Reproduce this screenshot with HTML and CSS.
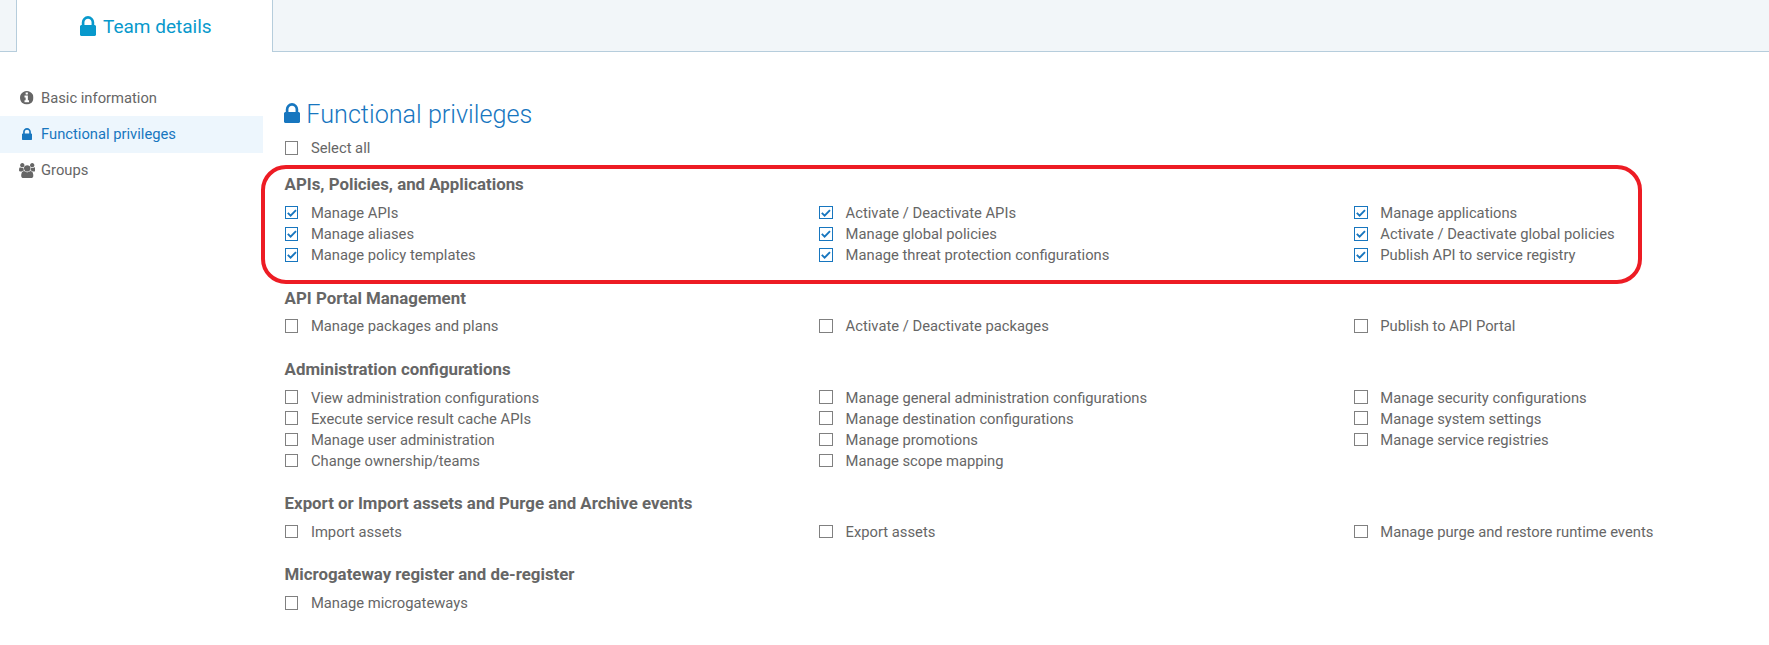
FILE: index.html
```html
<!DOCTYPE html>
<html lang="en">
<head>
<meta charset="utf-8">
<title>Team details</title>
<link rel="stylesheet" href="styles.css">
</head>
<body>
<svg class="sprite" aria-hidden="true">
  <symbol id="lock" viewBox="0 0 1152 1408" preserveAspectRatio="none"><path d="M320 640h512V448q0-106-75-181t-181-75-181 75-75 181zm832 96v576q0 40-28 68t-68 28H96q-40 0-68-28t-28-68V736q0-40 28-68t68-28h32V448q0-184 132-316T576 0t316 132 132 316v192h32q40 0 68 28t28 68z"/></symbol>
  <symbol id="info" viewBox="0 0 1536 1536"><path d="M1024 1248v-160q0-14-9-23t-23-9h-96V544q0-14-9-23t-23-9H544q-14 0-23 9t-9 23v160q0 14 9 23t23 9h96v320h-96q-14 0-23 9t-9 23v160q0 14 9 23t23 9h448q14 0 23-9t9-23zM896 352V192q0-14-9-23t-23-9H672q-14 0-23 9t-9 23v160q0 14 9 23t23 9h192q14 0 23-9t9-23zm640 416q0 209-103 385.500T1153.500 1433 768 1536t-385.500-103T103 1153.500 0 768t103-385.500T382.500 103 768 0t385.500 103T1433 382.500 1536 768z"/></symbol>
  <symbol id="group" viewBox="0 0 1920 1792" preserveAspectRatio="none"><path d="M593 896q-162 5-265 128H194q-82 0-138-40.500T0 865q0-353 124-353 6 0 43.500 21t97.500 42.500T384 597q67 0 133-23-5 37-5 66 0 139 81 256zm1071 637q0 120-73 189.500t-194 69.500H523q-121 0-194-69.500T256 1533q0-53 3.500-103.500t14-109T300 1212t43-97.500 62-81 85.500-53.500T602 960q10 0 43 21.500t73 48 107 48 135 21.500 135-21.500 107-48 73-48 43-21.500q61 0 111.500 20t85.500 53.500 62 81 43 97.500 26.500 108.500 14 109 3.500 103.500zM640 256q0 106-75 181t-181 75-181-75-75-181 75-181T384 0t181 75 75 181zm704 384q0 159-112.500 271.500T960 1024 688.500 911.500 576 640t112.500-271.500T960 256t271.500 112.500T1344 640zm576 225q0 78-56 118.500t-138 40.500h-134q-103-123-265-128 81-117 81-256 0-29-5-66 66 23 133 23 59 0 119-21.500t97.500-42.500 43.500-21q124 0 124 353zm-128-609q0 106-75 181t-181 75-181-75-75-181 75-181 181-75 181 75 75 181z"/></symbol>
  <symbol id="check" viewBox="0 0 12 12"><path d="M1.800 5.900 4.600 8.600 10 3.200" fill="none" stroke="currentColor" stroke-width="1.900"/></symbol>
</svg>

<header class="tabs">
  <div class="tab"><svg class="tab-icon"><use href="#lock"/></svg><span>Team details</span></div>
</header>

<div class="page">
  <nav class="side">
    <a class="side-item"><svg class="side-icon info"><use href="#info"/></svg><span>Basic information</span></a>
    <a class="side-item active"><svg class="side-icon lock"><use href="#lock"/></svg><span>Functional privileges</span></a>
    <a class="side-item"><svg class="side-icon group"><use href="#group"/></svg><span>Groups</span></a>
  </nav>

  <main class="content">
    <h1 class="title"><svg class="title-icon"><use href="#lock"/></svg><span>Functional privileges</span></h1>
    <label class="option select-all"><i class="box"></i><span>Select all</span></label>

    <section class="section">
      <h2>APIs, Policies, and Applications</h2>
      <div class="options">
        <label class="option checked"><i class="box"><svg><use href="#check"/></svg></i><span>Manage APIs</span></label>
        <label class="option checked"><i class="box"><svg><use href="#check"/></svg></i><span>Activate / Deactivate APIs</span></label>
        <label class="option checked"><i class="box"><svg><use href="#check"/></svg></i><span>Manage applications</span></label>
        <label class="option checked"><i class="box"><svg><use href="#check"/></svg></i><span>Manage aliases</span></label>
        <label class="option checked"><i class="box"><svg><use href="#check"/></svg></i><span>Manage global policies</span></label>
        <label class="option checked"><i class="box"><svg><use href="#check"/></svg></i><span>Activate / Deactivate global policies</span></label>
        <label class="option checked"><i class="box"><svg><use href="#check"/></svg></i><span>Manage policy templates</span></label>
        <label class="option checked"><i class="box"><svg><use href="#check"/></svg></i><span>Manage threat protection configurations</span></label>
        <label class="option checked"><i class="box"><svg><use href="#check"/></svg></i><span>Publish API to service registry</span></label>
      </div>
      <div class="highlight"></div>
    </section>

    <section class="section">
      <h2>API Portal Management</h2>
      <div class="options">
        <label class="option"><i class="box"></i><span>Manage packages and plans</span></label>
        <label class="option"><i class="box"></i><span>Activate / Deactivate packages</span></label>
        <label class="option"><i class="box"></i><span>Publish to API Portal</span></label>
      </div>
    </section>

    <section class="section">
      <h2>Administration configurations</h2>
      <div class="options">
        <label class="option"><i class="box"></i><span>View administration configurations</span></label>
        <label class="option"><i class="box"></i><span>Manage general administration configurations</span></label>
        <label class="option"><i class="box"></i><span>Manage security configurations</span></label>
        <label class="option"><i class="box"></i><span>Execute service result cache APIs</span></label>
        <label class="option"><i class="box"></i><span>Manage destination configurations</span></label>
        <label class="option"><i class="box"></i><span>Manage system settings</span></label>
        <label class="option"><i class="box"></i><span>Manage user administration</span></label>
        <label class="option"><i class="box"></i><span>Manage promotions</span></label>
        <label class="option"><i class="box"></i><span>Manage service registries</span></label>
        <label class="option"><i class="box"></i><span>Change ownership/teams</span></label>
        <label class="option"><i class="box"></i><span>Manage scope mapping</span></label>
      </div>
    </section>

    <section class="section">
      <h2>Export or Import assets and Purge and Archive events</h2>
      <div class="options">
        <label class="option"><i class="box"></i><span>Import assets</span></label>
        <label class="option"><i class="box"></i><span>Export assets</span></label>
        <label class="option"><i class="box"></i><span>Manage purge and restore runtime events</span></label>
      </div>
    </section>

    <section class="section">
      <h2>Microgateway register and de-register</h2>
      <div class="options">
        <label class="option"><i class="box"></i><span>Manage microgateways</span></label>
      </div>
    </section>
  </main>
</div>
</body>
</html>
```
FILE: styles.css
```css
* { box-sizing: border-box; }

body {
  margin: 0;
  background: #fff;
  color: #666;
  font-family: Roboto, "Liberation Sans", sans-serif;
  font-size: 14.750px;
  overflow: hidden;
}

svg { fill: currentColor; flex: none; }
.sprite { display: none; }

.tabs {
  height: 52px;
  padding-left: 16px;
  background: #f2f6f9;
  box-shadow: inset 0 -1px #b6cddc;
}

.tab {
  display: flex;
  align-items: center;
  width: 257px;
  height: 52px;
  padding-left: 63px;
  background: #fff;
  border: solid #b6cddc;
  border-width: 0 1px;
  color: #0899cc;
  font-size: 19px;
  line-height: 52px;
}
.tab span { padding-top: 2px; }
.tab-icon { width: 16px; height: 20px; margin-right: 7px; }

.page { display: flex; }

.side { flex: none; width: 263px; padding-top: 28px; }
.side-item {
  display: flex;
  align-items: center;
  height: 36px;
  padding-left: 18px;
  white-space: nowrap;
}
.side-item.active {
  height: 37px;
  margin-bottom: -1px;
  padding-bottom: 2px;
  background: #edf6fd;
  color: #1776bf;
}
.side-icon.info { width: 13.500px; height: 13.500px; margin: 0 7.300px 0 2.200px; }
.side-icon.lock { width: 10px; height: 12px; margin: 0 9px 0 4px; }
.side-icon.group { width: 16.500px; height: 15px; margin: 0 6px 0 0.500px; }

.content { flex: 1; min-width: 0; padding: 45.300px 0 0 21.600px; }

.title {
  display: flex;
  align-items: center;
  margin: 0 0 6.100px;
  color: #1776bf;
  font-size: 25.200px;
  font-weight: 300;
  line-height: 34px;
}
.title span { margin: 1px 0 -1px; }
.title-icon { width: 16px; height: 20px; margin: -2px 6px 0 -0.300px; }

.option {
  display: flex;
  align-items: center;
  height: 21.175px;
  line-height: 21.175px;
  white-space: nowrap;
}
.option span { margin-top: 2px; }
.select-all { margin-bottom: 13.580px; }

.box {
  display: flex;
  flex: none;
  width: 13.650px;
  height: 13.650px;
  margin-right: 12.700px;
  border: 1px solid #808080;
}
.box svg { width: 12px; height: 12px; }
.checked .box { border-color: #1776bf; color: #1776bf; }

.section { position: relative; padding-bottom: 20px; }
.section h2 {
  margin: 0 0 5.900px;
  font-size: 16.850px;
  font-weight: 700;
  line-height: 24px;
}
.options { display: grid; grid-template-columns: 534.700px 534.700px 1fr; }

/* Callout frame drawn over the first group of privileges */
.highlight {
  position: absolute;
  left: -23.600px;
  top: -7.200px;
  width: 1381px;
  height: 119px;
  border: 4px solid #ed1c24;
  border-radius: 25px;
}
```
